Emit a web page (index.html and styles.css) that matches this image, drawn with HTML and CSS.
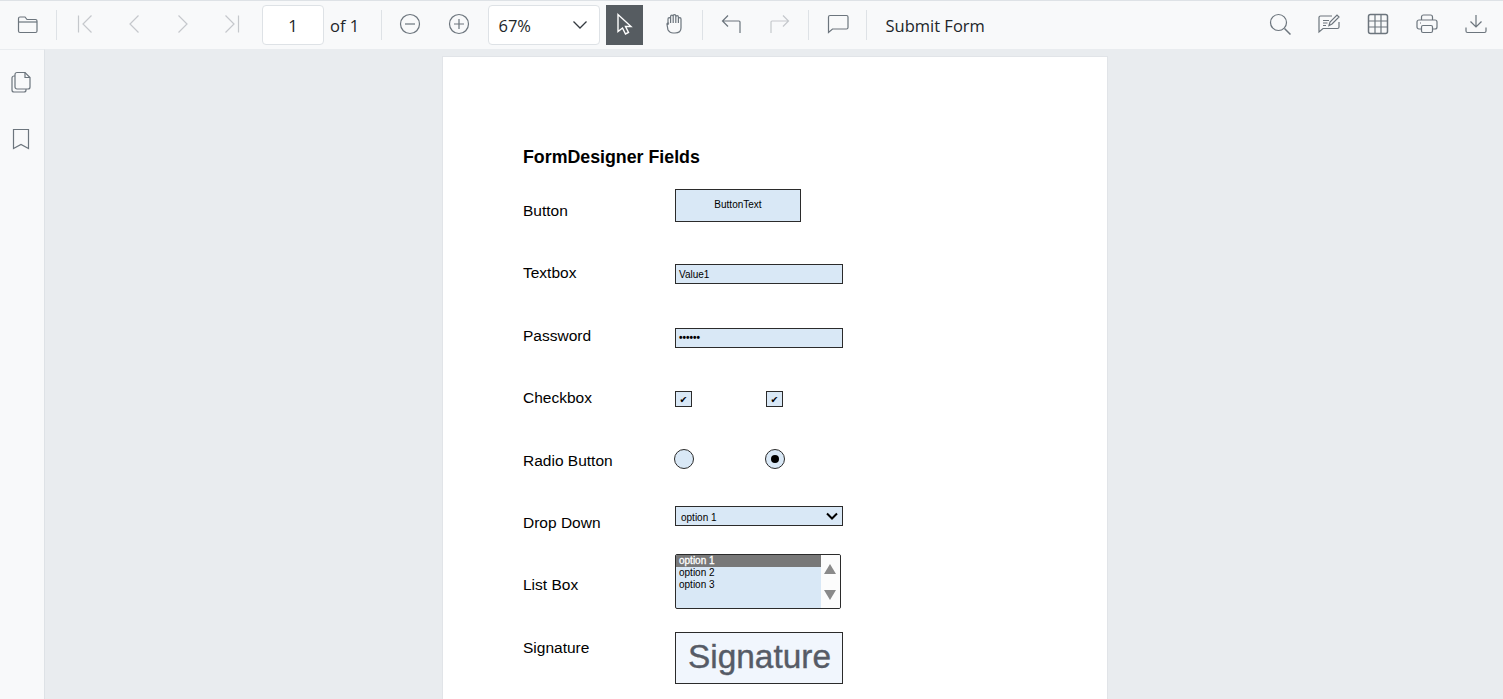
FILE: index.html
```html
<!DOCTYPE html>
<html lang="en">
<head>
    <meta charset="UTF-8">
    <meta name="viewport" content="width=device-width, initial-scale=1.0">
    <title>FormDesigner Fields</title>
    <link rel="stylesheet" href="styles.css">
</head>
<body>
    <div class="toolbar">
        <div class="tb-btn">
            <svg class="icon" viewBox="0 0 24 24"><path d="M2.500 19V6.500A1.500 1.500 0 0 1 4 5h5l2 2.500h8.500A1.500 1.500 0 0 1 21 9v10a1.500 1.500 0 0 1-1.500 1.500H4A1.500 1.500 0 0 1 2.500 19z"/><path d="M2.500 10H21"/></svg>
        </div>
        <div class="tb-sep"></div>
        <div class="tb-btn off">
            <svg class="icon" viewBox="0 0 24 24"><path d="M5.500 3.500v17M18.500 3.500 10 12l8.500 8.500"/></svg>
        </div>
        <div class="tb-btn off">
            <svg class="icon" viewBox="0 0 24 24"><path d="M16.500 3.500 8 12l8.500 8.500"/></svg>
        </div>
        <div class="tb-btn off">
            <svg class="icon" viewBox="0 0 24 24"><path d="M7.500 3.500 16 12l-8.500 8.500"/></svg>
        </div>
        <div class="tb-btn off">
            <svg class="icon" viewBox="0 0 24 24"><path d="M18.500 3.500v17M5.500 3.500 14 12l-8.500 8.500"/></svg>
        </div>
        <div class="page-input">1</div>
        <span class="page-total">of 1</span>
        <div class="tb-sep sep-zoom"></div>
        <div class="tb-btn">
            <svg class="icon" viewBox="0 0 24 24"><circle cx="12" cy="12" r="9.500"/><path d="M7 12h10"/></svg>
        </div>
        <div class="tb-btn">
            <svg class="icon" viewBox="0 0 24 24"><circle cx="12" cy="12" r="9.500"/><path d="M7 12h10M12 7v10"/></svg>
        </div>
        <div class="zoom-select">
            <span>67%</span>
            <svg class="chevron" viewBox="0 0 16 10"><path d="M1.500 1.500 8 8l6.500-6.500"/></svg>
        </div>
        <div class="tb-active">
            <svg class="icon" viewBox="0 0 24 24"><path class="cursor" d="M6 2.500v17l4.500-3.500 3 6 3-1.500-3-6H19z"/></svg>
        </div>
        <div class="tb-btn tb-hand">
            <svg class="icon" viewBox="0 0 24 24"><path d="M6 13V7a1.300 1.300 0 0 1 2.600 0v4M8.600 11V4.500a1.300 1.300 0 0 1 2.600 0V11M11.200 11V4a1.300 1.300 0 0 1 2.600 0v7M13.800 11V5a1.300 1.300 0 0 1 2.600 0v6M16.400 11V7a1.300 1.300 0 0 1 2.600 0v9c0 3.500-2.500 5-6 5h-2c-2.500 0-3.800-1.200-5-3l-1-5.500c-.2-1.500 1-2 2-1"/></svg>
        </div>
        <div class="tb-sep"></div>
        <div class="tb-btn">
            <svg class="icon" viewBox="0 0 24 24"><path d="M9 3.500 3.500 9 9 14.500M3.500 9H20a1 1 0 0 1 1 1v11"/></svg>
        </div>
        <div class="tb-btn off">
            <svg class="icon" viewBox="0 0 24 24"><path d="M15 3.500 20.500 9 15 14.500M20.500 9H4a1 1 0 0 0-1 1v11"/></svg>
        </div>
        <div class="tb-sep"></div>
        <div class="tb-btn">
            <svg class="icon" viewBox="0 0 24 24"><path d="M4 3.500h16.500A1.500 1.500 0 0 1 22 5v10.500a1.500 1.500 0 0 1-1.500 1.500H6.500l-4 3.500V5A1.500 1.500 0 0 1 4 3.500z"/></svg>
        </div>
        <div class="tb-sep"></div>
        <span class="submit-form">Submit Form</span>
        <div class="tb-right">
            <div class="tb-btn">
                <svg class="icon" viewBox="0 0 24 24"><circle cx="10.500" cy="10.500" r="8"/><path class="thick" d="m16.500 16.500 6 6"/></svg>
            </div>
            <div class="tb-btn">
                <svg class="icon" viewBox="0 0 24 24"><path d="M15 4H3.500A1.500 1.500 0 0 0 2 5.500V20l4-3.500h14.500A1.500 1.500 0 0 0 22 15V10"/><path d="M6 8.500h6M6 11h4.500M6 13.500h3M12 13.500l1-3.500 7-7 2 2-7 7z"/></svg>
            </div>
            <div class="tb-btn">
                <svg class="icon" viewBox="0 0 24 24"><rect class="thick" x="2.500" y="2.500" width="19" height="19" rx="2"/><path d="M2.500 9h19M2.500 15h19M9 2.500v19M15 2.500v19"/></svg>
            </div>
            <div class="tb-btn">
                <svg class="icon" viewBox="0 0 24 24"><path d="M6.500 8V5a2 2 0 0 1 2-2h7a2 2 0 0 1 2 2v3"/><path d="M6.500 17H4a2 2 0 0 1-2-2v-5a2 2 0 0 1 2-2h16a2 2 0 0 1 2 2v5a2 2 0 0 1-2 2h-2.500"/><rect x="6.500" y="13.500" width="11" height="7" rx="1.500"/><path d="M5 11h1"/></svg>
            </div>
            <div class="tb-btn">
                <svg class="icon" viewBox="0 0 24 24"><path d="M12 3v12M6.500 9.500 12 15l5.500-5.500M2 15.500V19a1.500 1.500 0 0 0 1.500 1.500h17A1.500 1.500 0 0 0 22 19v-3.500"/></svg>
            </div>
        </div>
    </div>

    <div class="main">
        <div class="sidebar">
            <svg class="icon" viewBox="0 0 24 24"><path d="M8 2.500h8l5 5V17a2 2 0 0 1-2 2H8a2 2 0 0 1-2-2V4.500a2 2 0 0 1 2-2z"/><path d="M16 2.500v5h5"/><path d="M6 6H5a2 2 0 0 0-2 2v12a2 2 0 0 0 2 2h10a2 2 0 0 0 2-2v-1"/></svg>
            <svg class="icon" viewBox="0 0 24 24"><path d="M4.500 2.500h15v19L12 17.500l-7.500 4z"/></svg>
        </div>
        <div class="viewer">
            <div class="page">
                <h1 class="page-title">FormDesigner Fields</h1>

                <div class="row">
                    <span class="row-label">Button</span>
                    <div class="f-button">ButtonText</div>
                </div>
                <div class="row">
                    <span class="row-label">Textbox</span>
                    <div class="f-text t-value">Value1</div>
                </div>
                <div class="row">
                    <span class="row-label">Password</span>
                    <div class="f-text t-pass">••••••</div>
                </div>
                <div class="row">
                    <span class="row-label">Checkbox</span>
                    <div class="pair pair-check">
                        <div class="f-check">✔</div>
                        <div class="f-check">✔</div>
                    </div>
                </div>
                <div class="row">
                    <span class="row-label">Radio Button</span>
                    <div class="pair pair-radio">
                        <div class="f-radio"></div>
                        <div class="f-radio checked"></div>
                    </div>
                </div>
                <div class="row">
                    <span class="row-label">Drop Down</span>
                    <div class="f-drop">
                        <span class="drop-value">option 1</span>
                        <svg class="drop-arrow" viewBox="0 0 12 8"><path d="M1 1.500 6 6.500l5-5"/></svg>
                    </div>
                </div>
                <div class="row">
                    <span class="row-label">List Box</span>
                    <div class="f-list">
                        <div class="list-items">
                            <div class="list-item selected">option 1</div>
                            <div class="list-item">option 2</div>
                            <div class="list-item">option 3</div>
                        </div>
                        <div class="list-scroll">
                            <svg class="scroll-arrow" viewBox="0 0 12 10"><path d="M6 0 12 10H0z"/></svg>
                            <svg class="scroll-arrow" viewBox="0 0 12 10"><path d="M0 0h12L6 10z"/></svg>
                        </div>
                    </div>
                </div>
                <div class="row">
                    <span class="row-label">Signature</span>
                    <div class="f-sign">Signature</div>
                </div>
            </div>
        </div>
    </div>
</body>
</html>
```

FILE: styles.css
```css
* {
    box-sizing: border-box;
}

html, body {
    height: 100%;
}

body {
    margin: 0;
    overflow: hidden;
    display: flex;
    flex-direction: column;
    font-family: "Open Sans", "Noto Sans", sans-serif;
    color: #212529;
    background-color: #e9ecef;
}

/* toolbar */
.toolbar {
    flex: none;
    height: 49px;
    display: flex;
    align-items: center;
    padding: 0 2.5px 0 3px;
    background-color: #f8f9fa;
    border-top: 1px solid #dee2e6;
}

.tb-btn {
    flex: none;
    width: 49px;
    height: 40px;
    display: flex;
    align-items: center;
    justify-content: center;
}

.icon {
    flex: none;
    width: 24px;
    height: 24px;
    fill: none;
    stroke: #6c757d;
    stroke-width: 1.2;
}

.toolbar .icon {
    margin-bottom: 2px;
}

.icon .thick {
    stroke-width: 1.5;
}

.off .icon {
    stroke: #c5c8cc;
}

.tb-sep {
    flex: none;
    width: 1px;
    height: 30px;
    margin: 0 4px 0 3.5px;
    background-color: #dee2e6;
}

.page-input {
    flex: none;
    width: 62px;
    height: 40px;
    margin-left: 5.5px;
    display: flex;
    align-items: center;
    justify-content: center;
    font-size: 16.5px;
    background-color: #fff;
    border: 1px solid #dee2e6;
    border-radius: 4px;
}

.page-total {
    margin-left: 6px;
    font-size: 16.5px;
    width: 29px;
    white-space: nowrap;
}

.sep-zoom {
    margin-left: 22px;
    margin-right: 3px;
}

.zoom-select {
    flex: none;
    width: 112px;
    height: 40px;
    margin-left: 4.5px;
    padding: 0 11px 0 10px;
    display: flex;
    align-items: center;
    justify-content: space-between;
    font-size: 16.5px;
    background-color: #fff;
    border: 1px solid #dee2e6;
    border-radius: 4px;
}

.chevron {
    width: 16px;
    height: 10px;
    fill: none;
    stroke: #343a40;
    stroke-width: 1.3;
}

.tb-active {
    flex: none;
    width: 37px;
    height: 40px;
    margin-left: 6px;
    display: flex;
    align-items: center;
    justify-content: center;
    background-color: #565c61;
}

.tb-active .cursor {
    stroke: #fff;
    stroke-width: 1.4;
}

.tb-hand {
    margin-left: 6.5px;
}

.submit-form {
    margin-left: 15px;
    font-size: 16.5px;
    white-space: nowrap;
}

.tb-right {
    margin-left: auto;
    display: flex;
    align-items: center;
}

/* main area */
.main {
    flex: 1;
    display: flex;
    min-height: 0;
}

.sidebar {
    flex: none;
    width: 45px;
    display: flex;
    flex-direction: column;
    align-items: center;
    gap: 33px;
    padding-top: 20px;
    padding-right: 3px;
    background-color: #f8f9fa;
    border-top: 1px solid #e9ecef;
    border-right: 1px solid #dee2e6;
}

.viewer {
    flex: 1;
    display: flex;
    justify-content: center;
    padding: 7px 0 0 2px;
    overflow: hidden;
}

/* pdf page */
.page {
    flex: none;
    width: 666px;
    height: 900px;
    padding: 90px 0 0 80px;
    background-color: #fff;
    border: 1px solid #e1e4e8;
    font-family: "Liberation Sans", Arial, sans-serif;
    color: #000;
}

.page-title {
    height: 33px;
    margin: 0;
    font-size: 17.8px;
    line-height: 20px;
    font-weight: bold;
}

.row {
    height: 62.4px;
    display: flex;
    align-items: flex-start;
}

.row-label {
    flex: none;
    width: 152px;
    margin-top: 21px;
    font-size: 15.5px;
    line-height: 20px;
}

.f-button, .f-text, .f-check, .f-radio, .f-drop, .f-list, .f-sign {
    background-color: #d9e8f6;
    border: 1px solid #2b2b2b;
}

.f-button {
    width: 126px;
    height: 33px;
    margin-top: 9px;
    padding-bottom: 2px;
    display: flex;
    align-items: center;
    justify-content: center;
    font-size: 10px;
}

.f-text {
    width: 168px;
    height: 20px;
    padding-left: 3px;
    font-size: 10px;
    line-height: 20px;
}

.t-value {
    margin-top: 22px;
}

.t-pass {
    margin-top: 23px;
    line-height: 18px;
    font-weight: bold;
}

.pair {
    display: flex;
}

.pair-check {
    gap: 74px;
    margin-top: 24px;
}

.f-check {
    width: 17px;
    height: 16px;
    display: flex;
    align-items: center;
    justify-content: center;
    font-family: "DejaVu Sans", sans-serif;
    font-size: 9.5px;
}

.pair-radio {
    gap: 71px;
    margin-top: 19px;
    margin-left: -1.5px;
}

.f-radio {
    width: 20px;
    height: 20px;
    border-radius: 50%;
    display: flex;
    align-items: center;
    justify-content: center;
}

.f-radio.checked::after {
    content: "";
    width: 8px;
    height: 8px;
    border-radius: 50%;
    background-color: #000;
}

.f-drop {
    width: 168px;
    height: 20px;
    margin-top: 14px;
    padding: 0 4px 0 5px;
    display: flex;
    align-items: center;
    justify-content: space-between;
    font-size: 10px;
}

.drop-value {
    padding-top: 3px;
}

.drop-arrow {
    width: 12px;
    height: 8px;
    fill: none;
    stroke: #000;
    stroke-width: 2;
}

.f-list {
    width: 166px;
    height: 55px;
    display: flex;
    border-radius: 2px;
    overflow: hidden;
}

.list-items {
    flex: 1;
    font-size: 10px;
    line-height: 12px;
}

.list-item {
    padding-left: 3px;
}

.list-item.selected {
    color: #fff;
    -webkit-text-stroke: 0.3px #fff;
    background-color: #787878;
}

.list-scroll {
    flex: none;
    width: 19px;
    padding: 9px 2px 8px 0;
    display: flex;
    flex-direction: column;
    align-items: center;
    justify-content: space-between;
    background-color: #fcfcfc;
}

.scroll-arrow {
    width: 12px;
    height: 10px;
    fill: #8a8a8a;
}

.f-sign {
    width: 168px;
    height: 52px;
    margin-top: 15px;
    padding: 0 0 2px 1px;
    display: flex;
    align-items: center;
    justify-content: center;
    font-size: 33.4px;
    -webkit-text-stroke: 0.4px #565b66;
    color: #565b66;
    background-color: #f1f6fd;
}
```
